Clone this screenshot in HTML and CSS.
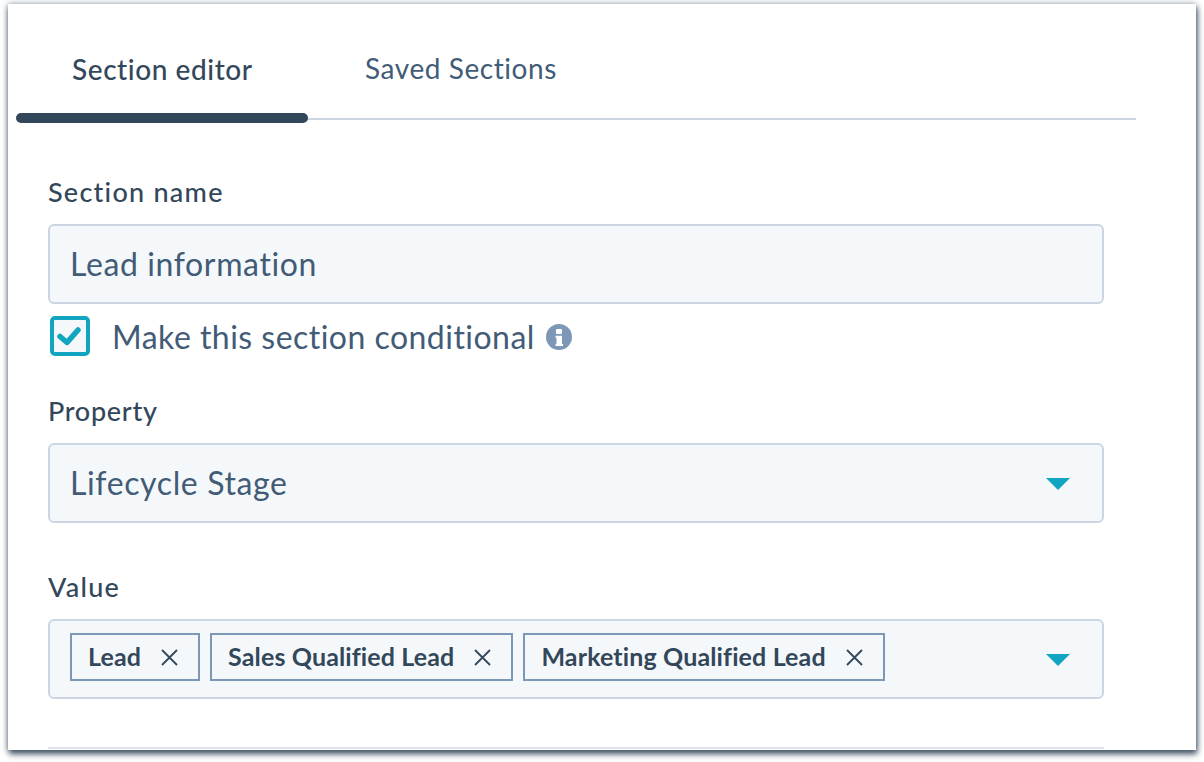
FILE: index.html
```html
<!DOCTYPE html>
<html lang="en">
<head>
<meta charset="utf-8">
<title>Section editor</title>
<link rel="stylesheet" href="styles.css">
</head>
<body>
<main class="card">
  <nav class="tabs">
    <div class="tab tab-active">Section editor</div>
    <div class="tab tab-plain">Saved Sections</div>
  </nav>
  <form class="form">
    <label class="label label-name">Section name</label>
    <div class="field"><span class="field-text">Lead information</span></div>
    <div class="check-row">
      <span class="checkbox">
        <svg width="28" height="24" viewBox="0 0 28 24"><path d="M4 12.500l7 6L22 6" fill="none" stroke="#12a5bf" stroke-width="5.500" stroke-linecap="round" stroke-linejoin="round"/></svg>
      </span>
      <span class="check-text">Make this section conditional</span>
      <svg class="info" width="26" height="26" viewBox="0 0 26 26"><circle cx="13" cy="13" r="13" fill="#7c98b6"/><rect x="10" y="5" width="6" height="5" rx="1" fill="#fff"/><path d="M9.500 11.800h6.500V20h1v2H9.500v-2H10.500v-6.200h-1z" fill="#fff"/></svg>
    </div>
    <label class="label label-property">Property</label>
    <div class="field field-select"><span class="field-text">Lifecycle Stage</span><i class="caret"></i></div>
    <label class="label label-value">Value</label>
    <div class="field field-select field-tags">
      <span class="tag">Lead<svg class="x" width="17" height="17" viewBox="0 0 17 17"><path d="M1 1l15 15M16 1L1 16" stroke="#33475b" stroke-width="1.800" fill="none"/></svg></span>
      <span class="tag">Sales Qualified Lead<svg class="x" width="17" height="17" viewBox="0 0 17 17"><path d="M1 1l15 15M16 1L1 16" stroke="#33475b" stroke-width="1.800" fill="none"/></svg></span>
      <span class="tag">Marketing Qualified Lead<svg class="x" width="17" height="17" viewBox="0 0 17 17"><path d="M1 1l15 15M16 1L1 16" stroke="#33475b" stroke-width="1.800" fill="none"/></svg></span>
      <i class="caret"></i>
    </div>
    <hr class="rule">
  </form>
</main>
</body>
</html>
```
FILE: styles.css
```css
* { box-sizing: border-box; }
html, body { margin: 0; height: 762px; overflow: hidden; background: #fff; }
body { padding: 4px 8px 12px; font-family: Lato, "Open Sans", sans-serif; color: #33475b; }
.card {
  height: 746px;
  background: #fff;
  box-shadow: 1px 4px 6px rgba(51, 71, 91, .9), 0 0 6px rgba(51, 71, 91, .5);
  overflow: hidden;
}
.tabs {
  display: flex;
  margin: 0 60px 0 8px;
  height: 116px;
  position: relative;
  border-bottom: 2px solid #cbd6e2;
}
.tab { font-size: 28px; line-height: 36px; letter-spacing: .57px; }
.tab-active { width: 292px; padding: 47px 0 0 56px; font-weight: 500; position: relative; }
.tab-active::after {
  content: "";
  position: absolute;
  left: 0; right: 0; bottom: -5px;
  height: 10px;
  background: #33475b;
  border-radius: 5px;
}
.tab-plain { padding: 46px 0 0 57px; color: #425b76; }
.form { padding: 0 92px 0 40px; }
.label { display: block; font-size: 27px; line-height: 34px; font-weight: 500; }
.label-name { margin-top: 55px; letter-spacing: 1.25px; }
.label-property { margin-top: 38px; letter-spacing: .7px; }
.label-value { margin-top: 47px; letter-spacing: 1.3px; }
.field {
  display: flex;
  align-items: center;
  height: 80px;
  margin-top: 15px;
  padding: 0 32px 0 20px;
  background: #f5f8fa;
  border: 2px solid #cbd6e2;
  border-radius: 6px;
  font-size: 32px;
  color: #425b76;
  letter-spacing: .62px;
}
.field-text { position: relative; top: -1px; }
.field-select { justify-content: space-between; }
.field-tags { justify-content: flex-start; gap: 10px; }
.caret {
  width: 0; height: 0;
  margin-top: 2px;
  border-left: 12px solid transparent;
  border-right: 12px solid transparent;
  border-top: 12px solid #12a5bf;
}
.field-tags .caret { margin-left: auto; }
.tag {
  display: inline-flex;
  align-items: center;
  justify-content: space-between;
  gap: 20px;
  height: 48px;
  margin-bottom: 4px;
  padding: 0 20px 3px 16px;
  border: 2px solid #7c98b6;
  font-size: 25px;
  font-weight: 700;
  color: #33475b;
  letter-spacing: .13px;
}
.tag .x { margin-top: 3px; }
.check-row { display: flex; align-items: center; height: 40px; margin-top: 12px; margin-left: 2px; }
.checkbox {
  display: flex; align-items: center; justify-content: center;
  width: 40px; height: 40px;
  border: 4px solid #12a5bf;
  border-radius: 5px;
  background: #f5f8fa;
}
.check-text { margin-left: 22px; font-size: 32px; color: #425b76; letter-spacing: .47px; }
.info { margin-left: 11px; margin-top: 1px; }
.rule { margin: 48px 0 0; border: 0; height: 2px; background: #dfe3eb; }
```
